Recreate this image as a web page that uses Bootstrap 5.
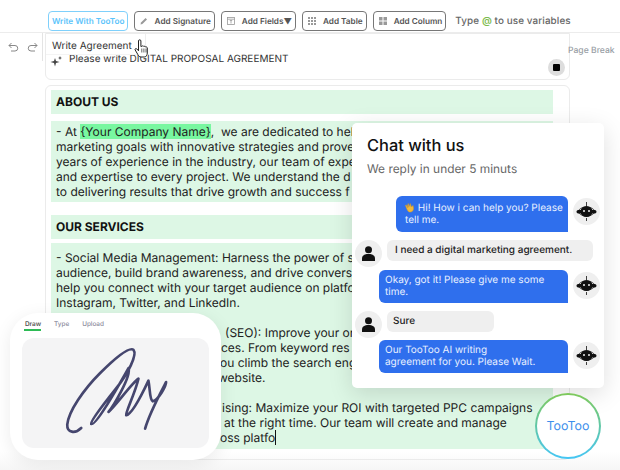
<!DOCTYPE html>
<html lang="en">
<head>
<meta charset="UTF-8">
<meta name="viewport" content="width=device-width, initial-scale=1">
<title>TooToo Agreement Editor</title>
<link href="https://cdn.jsdelivr.net/npm/bootstrap@5.3.0/dist/css/bootstrap.min.css" rel="stylesheet">
<style>
body { font-family: Inter, "Liberation Sans", sans-serif; background: #fff; overflow: hidden; text-rendering: geometricPrecision; }
.stage { width: 620px; height: 470px; overflow: hidden; background: linear-gradient(#fff 96%, #f6f6f6); }
.toolbar { height: 33px; padding: 11px 0 0 48px; border-bottom: 1px solid #ececec; gap: 6px; }
.tool-btn { height: 20px; padding: 0 3px 0 5px; font-size: 8.2px; font-weight: 600; color: #555; background: #fff; border: 1px solid #777; border-radius: 4px; white-space: nowrap; gap: 7px; }
.tool-btn.ai { color: #5cc4fb; border-color: #7fd0fb; padding: 0 2px 0 3px; }
.var-hint { height: 20px; font-size: 9.9px; font-weight: 500; color: #666; margin-left: 3px; letter-spacing: .1px; }
.var-hint b { color: #7cbb4e; font-weight: 600; }
.gutter-wrap { width: 45px; }
.gutter { width: 43px; height: 28px; gap: 8px; padding-left: 8px; border-right: 1px solid #e4e4e4; }
.doc-col { width: 525px; }
.prompt-box { height: 47px; border: 1px solid #ebebeb; border-radius: 0 0 6px 6px; padding: 18px 4px 0 4px; font-size: 10px; color: #333; }
.stop-btn { width: 17px; height: 17px; border-radius: 50%; background: #ddd; margin-top: 7px; }
.stop-btn i { width: 7px; height: 7px; background: #000; border-radius: 1px; }
.doc-sheet { margin-top: 5px; height: 375px; border: 1px solid #ebebeb; border-radius: 6px; padding: 4px 16px 0 5px; }
.sec-title { background: #ddf7e5; height: 24px; padding-left: 5px; font-size: 12px; font-weight: 700; color: #111; line-height: 23px; margin: 0 0 7px; }
.sec-body { background: #ddf7e5; padding: 3px 5px; font-size: 12px; line-height: 15px; color: #222; white-space: nowrap; overflow: hidden; margin: 0; }
.sec-body.long { padding-top: 7px; padding-bottom: 4px; }
.sec-gap { height: 13px; }
.sec-title.two { margin-bottom: 4px; }
.hl { background: #78f7a0; }
.caret-bar { border-right: 1px solid #111; }
.under-card { display: inline-block; }
.uc-169 { width: 169px; }
.uc-168 { width: 168px; }
.uc-166 { width: 166px; }
.uc-165 { width: 165px; }
.uc-164 { width: 164px; }
.uc-162 { width: 162px; }
.side-note { font-size: 8.6px; font-weight: 500; color: #9aa0a6; margin-left: -2px; padding-top: 12px; white-space: nowrap; }
.hover-tab { left: 46px; top: 34px; width: 100px; height: 21px; background: #fff; border-right: 1px solid #eee; border-bottom: 1px solid #f4f4f4; font-size: 10px; color: #333; padding: 5px 0 0 6px; }
.hand { left: 134px; top: 39px; }
.chat-panel { left: 352px; top: 123px; width: 252px; height: 265px; background: #fff; border-radius: 5px; box-shadow: 0 6px 24px rgba(0,0,0,.13); padding: 11px 4px 0 3px; }
.chat-title { font-size: 16.4px; font-weight: 500; color: #111; margin: 0 0 0 12px; line-height: 22px; }
.chat-sub { font-size: 11.9px; color: #666; margin: 5px 0 19px 12px; line-height: 16px; }
.bubble-row { gap: 5px; }
.bubble-row.bot { justify-content: flex-end; }
.gap-after-8 { margin-bottom: 8px; }
.gap-after-3 { margin-bottom: 3px; }
.gap-after-2 { margin-bottom: 2px; }
.bubble-blue { background: #2f6fed; color: #e8f0ff; font-size: 10px; line-height: 12px; padding: 4px 6px 5px; border-radius: 6px 6px 0 6px; width: 189px; white-space: nowrap; }
.bubble-blue.first { width: 172px; padding: 6px 4px 6px 9px; }
.bubble-gray { background: #efefef; color: #222; font-size: 10px; font-weight: 500; line-height: 13px; padding: 4px 8px; border-radius: 6px; height: 21px; white-space: nowrap; }
.bubble-gray.long { width: 206px; }
.bubble-gray.short { width: 107px; padding-left: 6px; }
.round-av { width: 27px; height: 27px; border-radius: 50%; background: #efefef; flex-shrink: 0; }
.round-av.bot-av { margin-top: 2px; }
.sign-card { left: 10px; top: 313px; width: 211px; height: 147px; background: #fff; border-radius: 28px; box-shadow: 0 4px 18px rgba(0,0,0,.08); padding: 5px 12px 0; }
.sign-tabs { gap: 13px; font-size: 6.4px; font-weight: 500; color: #8b8b9c; height: 20px; padding-left: 3px; }
.sign-tabs span { padding-top: 2px; height: 13px; }
.sign-tabs .on { color: #555; font-weight: 600; border-bottom: 2px solid #2dbb55; margin-left: -1px; padding: 2px 0 0 1px; width: 17px; }
.sign-pad { height: 110px; background: #f4f4f5; border-radius: 12px; }
.tootoo { left: 535px; top: 393px; width: 66px; height: 66px; border-radius: 50%; background: linear-gradient(#7fc95a, #45c6f5); padding: 2px; }
.tootoo span { width: 100%; height: 100%; border-radius: 50%; background: #fff; color: #3d8fec; font-size: 12.4px; font-weight: 400; }
</style>
</head>
<body>
<div class="stage position-relative">

  <div class="toolbar d-flex align-items-start">
    <div class="tool-btn ai d-flex align-items-center">Write With TooToo</div>
    <div class="tool-btn d-flex align-items-center">
      <svg width="8" height="8" viewBox="0 0 8 8"><path d="M0.5 7.5 1 5.6 5.6 1 7 2.4 2.4 7Z" fill="#999"/></svg>Add Signature
    </div>
    <div class="tool-btn d-flex align-items-center">
      <svg width="8" height="8" viewBox="0 0 8 8" fill="none" stroke="#999" stroke-width=".8"><rect x=".5" y=".5" width="7" height="7"/><path d="M.5 2.2h7M4 3.500v3M2.800 3.500h2.400"/></svg><span>Add Fields▼</span>
    </div>
    <div class="tool-btn d-flex align-items-center">
      <svg width="8" height="8" viewBox="0 0 8 8" fill="#999"><rect width="2" height="2"/><rect x="3" width="2" height="2"/><rect x="6" width="2" height="2"/><rect y="3" width="2" height="2"/><rect x="3" y="3" width="2" height="2"/><rect x="6" y="3" width="2" height="2"/><rect y="6" width="2" height="2"/><rect x="3" y="6" width="2" height="2"/><rect x="6" y="6" width="2" height="2"/></svg>Add Table
    </div>
    <div class="tool-btn d-flex align-items-center">
      <svg width="8" height="8" viewBox="0 0 8 8" fill="#999"><rect width="3.500" height="3.500"/><rect x="4.500" width="3.500" height="3.500"/><rect y="4.500" width="3.500" height="3.500"/><rect x="4.500" y="4.500" width="3.500" height="3.500"/></svg>Add Column
    </div>
    <div class="var-hint d-flex align-items-center"><span>Type <b>@</b> to use variables</span></div>
  </div>

  <div class="d-flex align-items-start">
    <div class="gutter-wrap">
      <div class="gutter d-flex align-items-center">
        <svg width="11" height="10" viewBox="0 0 11 10" fill="none" stroke="#888" stroke-width="1"><path d="M3.500 1 1 3.500 3.500 6M1 3.500h6a2.600 2.600 0 0 1 0 5.500H3"/></svg>
        <svg width="11" height="10" viewBox="0 0 11 10" fill="none" stroke="#888" stroke-width="1"><path d="M7.500 1 10 3.500 7.500 6M10 3.500H4a2.600 2.600 0 0 0 0 5.500h4"/></svg>
      </div>
    </div>
    <div class="doc-col">
      <div class="prompt-box d-flex justify-content-between">
        <div class="d-flex align-items-start" style="gap:6px">
          <svg class="mt-1" width="13" height="11" viewBox="0 0 13 11" fill="#444"><path d="M5 2 6 5 9.500 6 6 7 5 10.500 4 7 .5 6 4 5Z"/><path d="M10 0 10.600 1.500 12 2 10.600 2.500 10 4 9.400 2.500 8 2 9.400 1.500Z"/></svg>
          <span>Please write DIGITAL PROPOSAL AGREEMENT</span>
        </div>
        <div class="stop-btn d-flex align-items-center justify-content-center"><i></i></div>
      </div>
      <div class="doc-sheet">
        <h2 class="sec-title">ABOUT US</h2>
        <p class="sec-body">- At <span class="hl">{Your Company Name}</span>,&nbsp; we are dedicated to hel<br>marketing goals with innovative strategies and prove<br>years of experience in the industry, our team of expe<br>and expertise to every project. We understand the d<br>to delivering results that drive growth and success f</p>
        <div class="sec-gap"></div>
        <h2 class="sec-title two">OUR SERVICES</h2>
        <p class="sec-body long">- Social Media Management: Harness the power of s<br>audience, build brand awareness, and drive convers<br>help you connect with your target audience on platfo<br>Instagram, Twitter, and LinkedIn.<br><br><span class="under-card uc-169"></span>(SEO): Improve your or<br><span class="under-card uc-165"></span>ces. From keyword res<br><span class="under-card uc-164"></span>ou climb the search eng<br><span class="under-card uc-162"></span>website.<br><br><span class="under-card uc-166"></span>ising: Maximize your ROI with targeted PPC campaigns<br><span class="under-card uc-168"></span>at the right time. Our team will create and manage<br><span class="under-card uc-164"></span>oss <span class="caret-bar">platfo</span></p>
      </div>
    </div>
    <div class="side-note">Page Break</div>
  </div>

  <div class="hover-tab position-absolute">Write Agreement</div>
  <svg class="hand position-absolute" width="15" height="19" viewBox="0 0 15 19"><path d="M4.500 2a1.200 1.200 0 0 1 2.400 0v5.500l1-.2c.3-.6 1.700-.6 2 .2.500-.4 1.500-.2 1.700.5.700-.3 1.700.1 1.700 1V14c0 2-1.300 4-3 4H7c-1.500 0-2.300-1-3-2.200L1.200 11c-.6-1 .7-2 1.500-1.200l1.800 2Z" fill="#fff" stroke="#222" stroke-width="1"/><path d="M7.800 9.500v4M9.900 9.500v4M12 9.500v4" stroke="#222" stroke-width=".7"/></svg>

  <div class="chat-panel position-absolute">
    <h3 class="chat-title">Chat with us</h3>
    <p class="chat-sub">We reply in under 5 minuts</p>

    <div class="bubble-row bot d-flex align-items-start gap-after-8">
      <div class="bubble-blue first"><svg width="10" height="11" viewBox="0 0 10 11" class="align-top"><path d="M1 3 3 6 2 2.500 3.500 5 3.200 1.500 5 4.500 5.300 1.500 6.500 5 8 3.500 8.500 6C8.800 9 6.500 10.500 4.500 10 2.500 9.500 1.500 6 .5 3.500Z" fill="#f2b93b" stroke="#d99a20" stroke-width=".5"/></svg> Hi! How i can help you? Please<br>tell me.</div>
      <div class="round-av bot-av d-flex align-items-center justify-content-center"><svg width="23" height="21" viewBox="0 0 21 21"><use href="#bot-face"/></svg></div>
    </div>
    <div class="bubble-row d-flex align-items-start gap-after-3">
      <div class="round-av d-flex align-items-center justify-content-center"><svg width="15" height="15" viewBox="0 0 15 15"><use href="#user-face"/></svg></div>
      <div class="bubble-gray long">I need a digital marketing agreement.</div>
    </div>
    <div class="bubble-row bot d-flex align-items-start gap-after-8">
      <div class="bubble-blue">Okay, got it! Please give me some<br>time.</div>
      <div class="round-av bot-av d-flex align-items-center justify-content-center"><svg width="23" height="21" viewBox="0 0 21 21"><use href="#bot-face"/></svg></div>
    </div>
    <div class="bubble-row d-flex align-items-start gap-after-2">
      <div class="round-av d-flex align-items-center justify-content-center"><svg width="15" height="15" viewBox="0 0 15 15"><use href="#user-face"/></svg></div>
      <div class="bubble-gray short">Sure</div>
    </div>
    <div class="bubble-row bot d-flex align-items-start">
      <div class="bubble-blue">Our TooToo AI writing<br>agreement for you. Please Wait.</div>
      <div class="round-av bot-av d-flex align-items-center justify-content-center"><svg width="23" height="21" viewBox="0 0 21 21"><use href="#bot-face"/></svg></div>
    </div>
  </div>

  <div class="sign-card position-absolute">
    <div class="sign-tabs d-flex">
      <span class="on">Draw</span><span>Type</span><span>Upload</span>
    </div>
    <div class="sign-pad">
      <svg width="188" height="110" viewBox="65 100 565 330" fill="none" stroke="#45466e" stroke-width="8" stroke-linecap="round" stroke-linejoin="round">
        <path d="M243 370C225 388 200 385 201 360 205 320 250 255 300 205 340 165 385 125 400 135 412 150 385 205 345 255 305 305 270 350 273 358 285 365 340 270 385 190 395 215 335 310 325 322 350 300 395 235 415 222 405 265 375 325 378 332 395 330 430 260 445 228 450 250 448 285 458 290 475 285 498 245 498 232 492 245 450 320 435 372"/>
      </svg>
    </div>
  </div>

  <div class="tootoo position-absolute"><span class="d-flex align-items-center justify-content-center">TooToo</span></div>

  <svg width="0" height="0" class="position-absolute">
    <defs>
      <g id="bot-face">
        <path d="M10.500 1v4M10.500 17v3" stroke="#111" stroke-width=".8"/>
        <ellipse cx="10.500" cy="10.500" rx="6" ry="5.500" fill="#111"/>
        <rect x=".5" y="9" width="20" height="3.500" rx="1.700" fill="#111"/>
        <ellipse cx="10.500" cy="10.500" rx="8" ry="4.500" fill="none" stroke="#111" stroke-width=".7"/>
        <circle cx="8" cy="10" r="1" fill="#efefef"/><circle cx="13" cy="10" r="1" fill="#efefef"/>
      </g>
      <g id="user-face">
        <circle cx="7.500" cy="3.800" r="3.500" fill="#111"/>
        <path d="M1 15v-2.500C1 9.500 3.500 8 7.500 8s6.500 1.500 6.500 4.500V15Z" fill="#111"/>
      </g>
    </defs>
  </svg>
</div>
<script src="https://cdn.jsdelivr.net/npm/bootstrap@5.3.0/dist/js/bootstrap.bundle.min.js"></script>
</body>
</html>
